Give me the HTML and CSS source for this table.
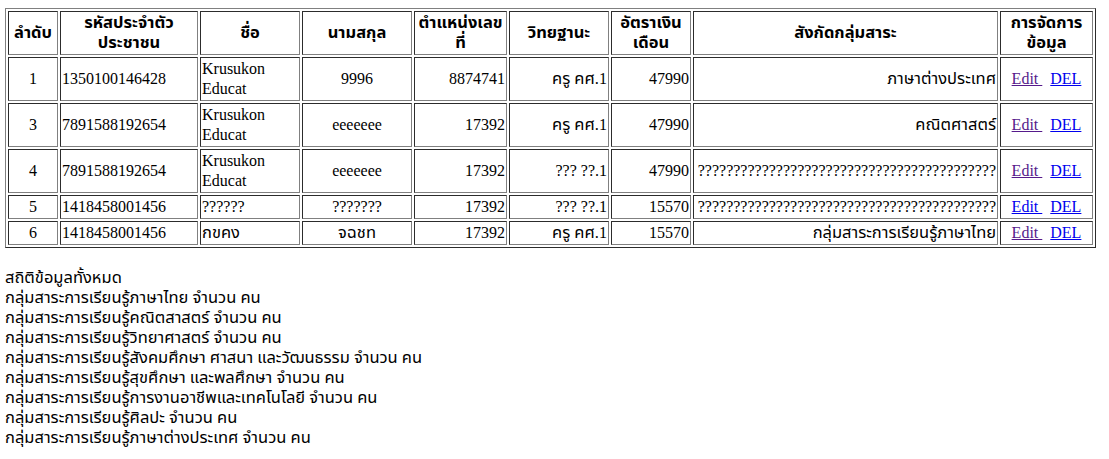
FILE: index.html
```html
<!DOCTYPE html>
<html lang="th">
<head>
<meta charset="utf-8">
<title>ข้อมูลครู</title>
<link rel="stylesheet" href="styles.css">
</head>
<body>
<table class="data">
  <colgroup>
    <col class="w1"><col class="w2"><col class="w3"><col class="w4"><col class="w5"><col class="w6"><col class="w7"><col class="w8"><col class="w9">
  </colgroup>
  <thead>
    <tr>
      <th>ลำดับ</th>
      <th>รหัสประจำตัวประชาชน</th>
      <th>ชื่อ</th>
      <th>นามสกุล</th>
      <th>ตำแหน่งเลขที่</th>
      <th>วิทยฐานะ</th>
      <th>อัตราเงินเดือน</th>
      <th>สังกัดกลุ่มสาระ</th>
      <th>การจัดการข้อมูล</th>
    </tr>
  </thead>
  <tbody>
    <tr class="tall">
      <td class="c">1</td>
      <td>1350100146428</td>
      <td>Krusukon Educat</td>
      <td class="c">9996</td>
      <td class="r">8874741</td>
      <td class="r"><span class="th">ครู คศ.</span>1</td>
      <td class="r">47990</td>
      <td class="r"><span class="th">ภาษาต่างประเทศ</span></td>
      <td class="c"><a class="visited" href="#edit1">Edit </a>&nbsp; <a href="#del1">DEL</a></td>
    </tr>
    <tr class="tall">
      <td class="c">3</td>
      <td>7891588192654</td>
      <td>Krusukon Educat</td>
      <td class="c">eeeeeee</td>
      <td class="r">17392</td>
      <td class="r"><span class="th">ครู คศ.</span>1</td>
      <td class="r">47990</td>
      <td class="r"><span class="th">คณิตศาสตร์</span></td>
      <td class="c"><a class="visited" href="#edit3">Edit </a>&nbsp; <a href="#del3">DEL</a></td>
    </tr>
    <tr class="tall">
      <td class="c">4</td>
      <td>7891588192654</td>
      <td>Krusukon Educat</td>
      <td class="c">eeeeeee</td>
      <td class="r">17392</td>
      <td class="r">??? ??.1</td>
      <td class="r">47990</td>
      <td class="r">??????????????????????????????????????????</td>
      <td class="c"><a class="visited" href="#edit4">Edit </a>&nbsp; <a href="#del4">DEL</a></td>
    </tr>
    <tr class="short">
      <td class="c">5</td>
      <td>1418458001456</td>
      <td>??????</td>
      <td class="c">???????</td>
      <td class="r">17392</td>
      <td class="r">??? ??.1</td>
      <td class="r">15570</td>
      <td class="r">??????????????????????????????????????????</td>
      <td class="c"><a href="#edit5">Edit </a>&nbsp; <a href="#del5">DEL</a></td>
    </tr>
    <tr class="short">
      <td class="c">6</td>
      <td>1418458001456</td>
      <td><span class="th">กขคง</span></td>
      <td class="c"><span class="th">จฉชท</span></td>
      <td class="r">17392</td>
      <td class="r"><span class="th">ครู คศ.</span>1</td>
      <td class="r">15570</td>
      <td class="r"><span class="th">กลุ่มสาระการเรียนรู้ภาษาไทย</span></td>
      <td class="c"><a class="visited" href="#edit6">Edit </a>&nbsp; <a href="#del6">DEL</a></td>
    </tr>
  </tbody>
</table>
<div class="stats">
  <p>สถิติข้อมูลทั้งหมด</p>
  <p>กลุ่มสาระการเรียนรู้ภาษาไทย จำนวน คน</p>
  <p>กลุ่มสาระการเรียนรู้คณิตสาสตร์ จำนวน คน</p>
  <p>กลุ่มสาระการเรียนรู้วิทยาศาสตร์ จำนวน คน</p>
  <p>กลุ่มสาระการเรียนรู้สังคมศึกษา ศาสนา และวัฒนธรรม จำนวน คน</p>
  <p>กลุ่มสาระการเรียนรู้สุขศึกษา และพลศึกษา จำนวน คน</p>
  <p>กลุ่มสาระการเรียนรู้การงานอาชีพและเทคโนโลยี จำนวน คน</p>
  <p>กลุ่มสาระการเรียนรู้ศิลปะ จำนวน คน</p>
  <p>กลุ่มสาระการเรียนรู้ภาษาต่างประเทศ จำนวน คน</p>
</div>
</body>
</html>
```

FILE: styles.css
```css
html, body {
  background: #ffffff;
}
body {
  margin: 8px 5px;
  font-family: "Liberation Serif", Tahoma, "Noto Sans Thai", "Noto Sans", "DejaVu Sans", serif;
  font-size: 16px;
  line-height: 20px;
  color: #000000;
}
.data {
  width: 1091px;
  table-layout: fixed;
  border: 1px outset #808080;
  border-spacing: 2px;
  border-collapse: separate;
}
.data th,
.data td {
  border: 1px inset #808080;
  padding: 1px;
  line-height: 20px;
  vertical-align: middle;
  overflow: hidden;
}
.data th {
  font-weight: bold;
  font-size: 16.5px;
  text-align: center;
  height: 40px;
}
.data td {
  text-align: left;
}
.data tr.tall td {
  height: 40px;
}
.data tr.short td {
  height: 20px;
}
.data td.c { text-align: center; }
.data td.r { text-align: right; }
.th {
  font-size: 16.5px;
  line-height: 16px;
}
.w1 { width: 50px; }
.w2 { width: 138px; }
.w3 { width: 100px; }
.w4 { width: 110px; }
.w5 { width: 93px; }
.w6 { width: 100px; }
.w7 { width: 80px; }
.w8 { width: 305px; }
.w9 { width: 93px; }
.data a {
  color: #0000ee;
  text-decoration: underline;
}
.data a.visited {
  color: #551a8b;
}
.stats {
  margin-top: 20px;
  font-size: 16.5px;
}
.stats p {
  margin: 0;
  line-height: 20px;
}
```
